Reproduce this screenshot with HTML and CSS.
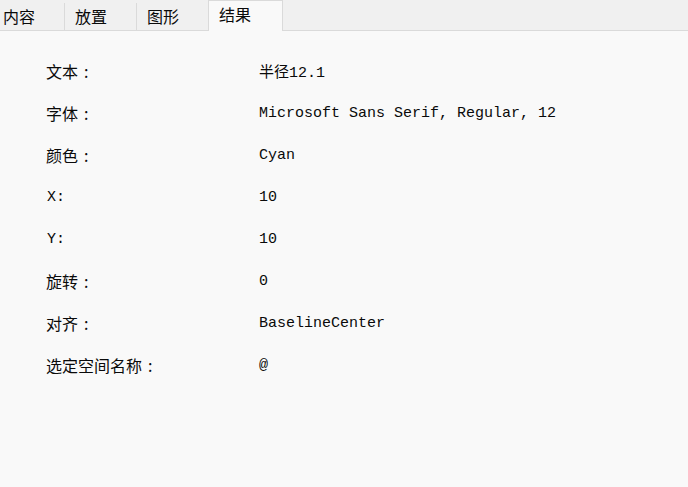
FILE: index.html
```html
<!DOCTYPE html>
<html lang="zh-CN">
<head>
<meta charset="UTF-8">
<title>结果</title>
<link rel="stylesheet" href="styles.css">
</head>
<body>
<div class="tabs">
  <div class="tab first">内容</div>
  <div class="tab">放置</div>
  <div class="tab">图形</div>
  <div class="tab on">结果</div>
</div>

<div class="page">
  <div class="row"><span class="lbl">文本<i>:</i></span><span class="val">半径12.1</span></div>
  <div class="row"><span class="lbl">字体<i>:</i></span><span class="val">Microsoft Sans Serif, Regular, 12</span></div>
  <div class="row"><span class="lbl">颜色<i>:</i></span><span class="val">Cyan</span></div>
  <div class="row"><span class="lbl mono">X:</span><span class="val">10</span></div>
  <div class="row"><span class="lbl mono">Y:</span><span class="val">10</span></div>
  <div class="row"><span class="lbl">旋转<i>:</i></span><span class="val">0</span></div>
  <div class="row"><span class="lbl">对齐<i>:</i></span><span class="val">BaselineCenter</span></div>
  <div class="row"><span class="lbl">选定空间名称<i>:</i></span><span class="val">@</span></div>
</div>
</body>
</html>
```

FILE: styles.css
```css
:root{--strip:#f0f0f0;--page:#f9f9f9;--line:#dadada;--txt:#0a0a0a}
html,body{height:100%}
body{margin:0;background:var(--page);color:var(--txt);font-family:'Noto Sans CJK SC',sans-serif;display:flex;flex-direction:column}

/* -------- tab strip ---------- */
.tabs{display:flex;align-items:flex-end;height:30px;background:var(--strip);border-bottom:1px solid var(--line)}
.tab{height:27px;line-height:27px;font-size:16px;padding:0 0 0 10px;box-sizing:border-box;border-right:1px solid var(--line)}
.tab.first{width:65px;padding-left:3px}
.tab:nth-child(2){width:72px}
.tab:nth-child(3){width:71px;border-right:none}
.tab.on{width:75px;height:31px;line-height:27px;margin-bottom:-1px;background:var(--page);border:1px solid var(--line);border-bottom:none}

/* -------- property rows ---------- */
.page{flex:1;padding:19px 0 0 46px}
.row{display:flex;height:42px;align-items:center}
.lbl{width:213px;font-size:16px}
.lbl i{font-style:normal;margin-left:6px}
.lbl.mono,.val{font-family:'Liberation Mono','Noto Sans CJK SC',monospace;font-size:15px}
.lbl.mono{width:213px;margin-left:1px;margin-right:-1px}
```
